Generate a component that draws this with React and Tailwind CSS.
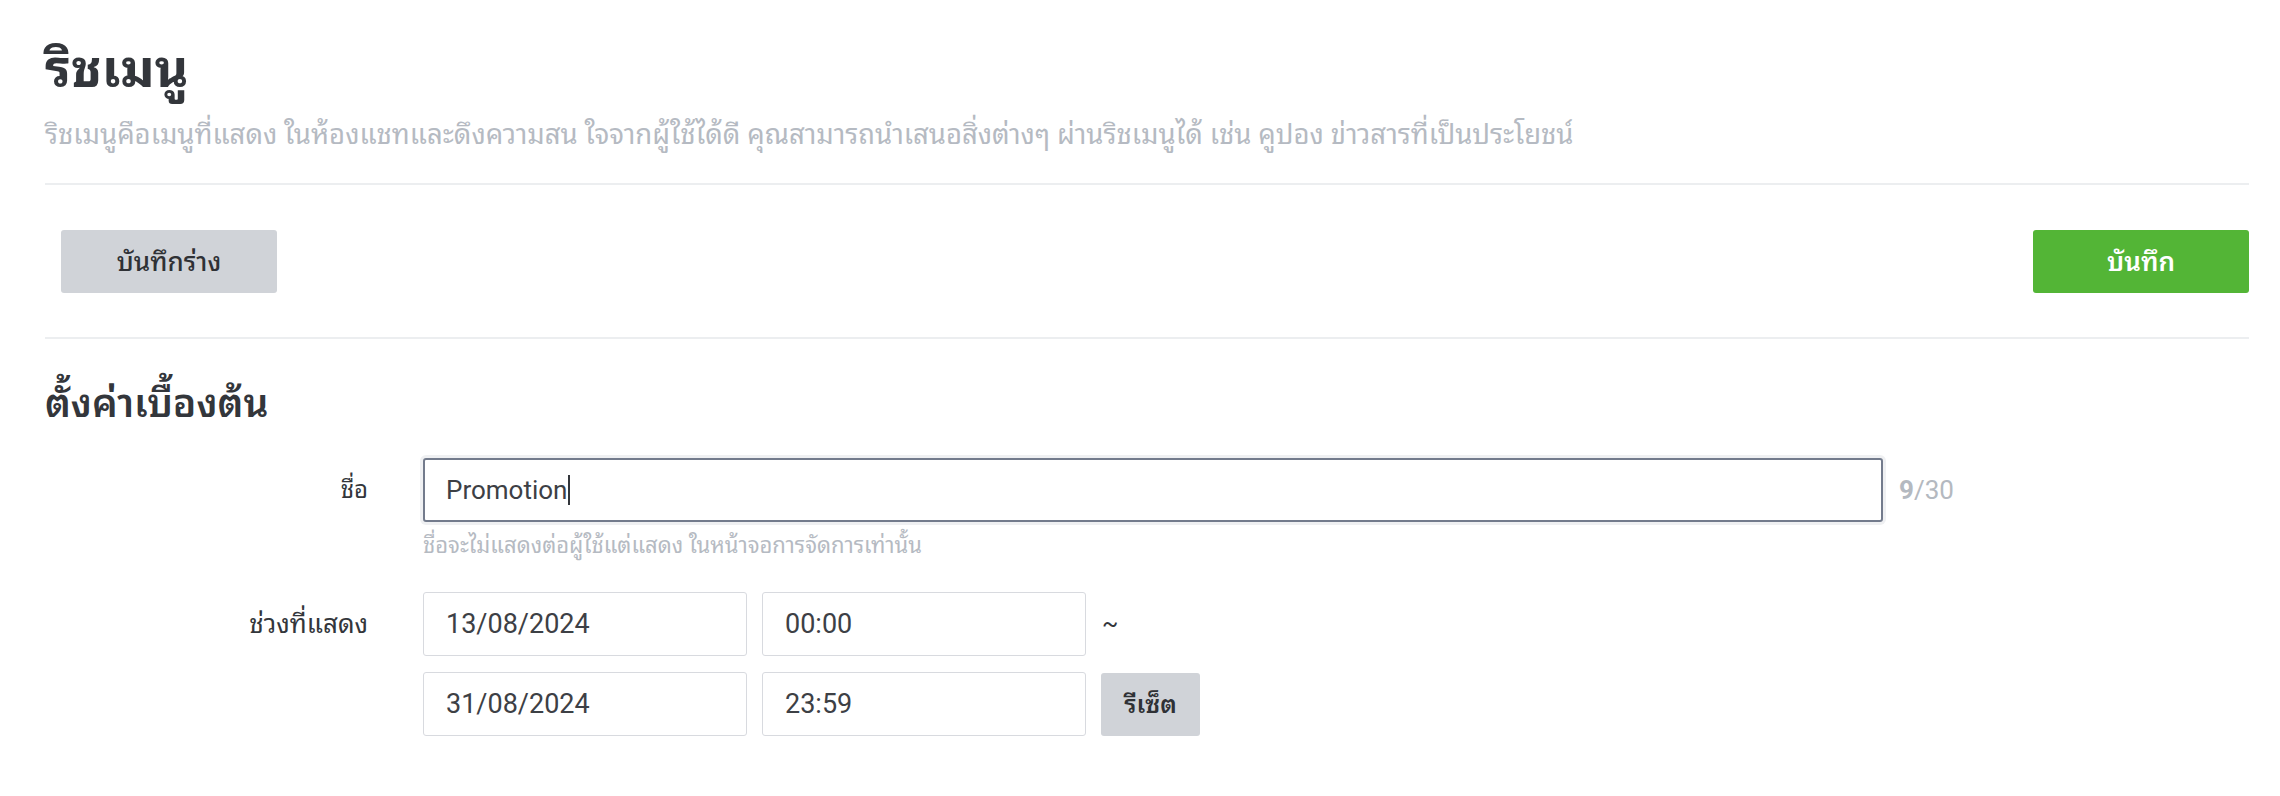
export default function App() {
  return (
    <div className="min-h-[796px] w-full bg-white font-['Roboto','Noto_Sans_Thai_Looped',sans-serif] text-[#33363b]">
      <div className="pl-[45px] pr-[31px] pt-[38px]">
        <h1 className="text-[52px] font-bold leading-[64px] text-[#33363b]">ริชเมนู</h1>
        <p className="mt-[17px] text-[27.5px] leading-[32px] text-[#b5bac2]">
          ริชเมนูคือเมนูที่แสดง ในห้องแชทและดึงความสน ใจจากผู้ใช้ได้ดี คุณสามารถนำเสนอสิ่งต่างๆ ผ่านริชเมนูได้ เช่น คูปอง ข่าวสารที่เป็นประโยชน์
        </p>
        <div className="mt-[32px] border-t-2 border-[#eceef0]" />
        <div className="flex items-center justify-between pb-[44px] pl-[16px] pt-[45px]">
          <button className="h-[63px] w-[216px] rounded-[3px] bg-[#d0d3d8] text-[26px] font-medium leading-none text-[#2f3135]">บันทึกร่าง</button>
          <button className="h-[63px] w-[216px] rounded-[3px] bg-[#53b536] text-[26px] font-semibold leading-none text-white">บันทึก</button>
        </div>
        <div className="border-t-2 border-[#eceef0]" />
        <h2 className="mt-[37px] text-[39px] font-semibold leading-[56px] text-[#33363b]">ตั้งค่าเบื้องต้น</h2>

        <div className="mt-[26px] flex items-start">
          <div className="flex h-[64px] w-[323px] items-center justify-end text-[24px] text-[#33363b]">ชื่อ</div>
          <div className="ml-[55px]">
            <div className="flex items-center">
              <div className="flex h-[64px] w-[1460px] items-center rounded-[3px] border-2 border-[#737b8c] px-[21px] text-[26px] text-[#3d4045] shadow-[0_0_0_3px_#eff0f2]">
                Promotion<span className="ml-[1px] inline-block h-[30px] w-[2px] bg-[#33363b]" />
              </div>
              <div className="ml-[16px] text-[26px] text-[#b4b9c0]"><span className="font-bold">9</span>/30</div>
            </div>
            <div className="mt-[11px] text-[22px] leading-[26px] text-[#b5bac2]">ชื่อจะไม่แสดงต่อผู้ใช้แต่แสดง ในหน้าจอการจัดการเท่านั้น</div>
          </div>
        </div>

        <div className="mt-[33px] flex items-start">
          <div className="flex h-[64px] w-[323px] items-center justify-end text-[26px] text-[#33363b]">ช่วงที่แสดง</div>
          <div className="ml-[55px] flex flex-col gap-[16px]">
            <div className="flex items-center gap-[15px]">
              <div className="flex h-[64px] w-[324px] items-center rounded-[3px] border border-[#d8dadf] px-[22px] text-[27px] text-[#3d4045]">13/08/2024</div>
              <div className="flex h-[64px] w-[324px] items-center rounded-[3px] border border-[#d8dadf] px-[22px] text-[27px] text-[#3d4045]">00:00</div>
              <div className="ml-[1px] text-[24px] text-[#33363b]">~</div>
            </div>
            <div className="flex items-center gap-[15px]">
              <div className="flex h-[64px] w-[324px] items-center rounded-[3px] border border-[#d8dadf] px-[22px] text-[27px] text-[#3d4045]">31/08/2024</div>
              <div className="flex h-[64px] w-[324px] items-center rounded-[3px] border border-[#d8dadf] px-[22px] text-[27px] text-[#3d4045]">23:59</div>
              <button className="h-[63px] w-[99px] rounded-[3px] bg-[#d0d3d8] text-[25px] font-semibold leading-none text-[#2f3135]">รีเซ็ต</button>
            </div>
          </div>
        </div>
      </div>
    </div>
  );
}
